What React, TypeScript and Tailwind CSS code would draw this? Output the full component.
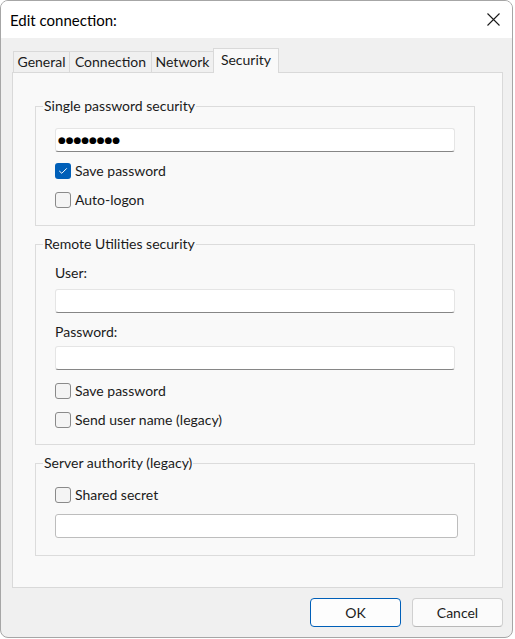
import React from "react";

function Checkbox({ checked, label }: { checked?: boolean; label: string }) {
  return (
    <div className="flex items-center h-[16px] gap-[4px]">
      {checked ? (
        <div className="w-[16px] h-[16px] rounded-[3px] bg-[#005fb8] flex items-center justify-center">
          <svg width="10" height="8" viewBox="0 0 10 8" fill="none">
            <path d="M1.5 4.2 L3.8 6.3 L8.5 1.6" stroke="#ffffff" strokeWidth="1" strokeLinecap="round" strokeLinejoin="round" />
          </svg>
        </div>
      ) : (
        <div className="w-[16px] h-[16px] rounded-[3px] border border-[#8a8a8a] bg-[#f4f4f4]" />
      )}
      <span className="leading-[20px] text-[14px] text-[#1b1b1b]">{label}</span>
    </div>
  );
}

function TextBox({ value, wide }: { value?: string; wide?: boolean }) {
  return wide ? (
    <div className="h-[24px] mr-[-3px] rounded-[3px] border border-[#bdbdbd] bg-white" />
  ) : (
    <div className="h-[24px] rounded-[3px] border border-[#e5e5e5] border-b-[#868686] bg-white flex items-center pl-[2px]">
      {value ? (
        <span className="font-['DejaVu_Sans',sans-serif] text-[9px] tracking-[-0.1px] leading-none text-black">{value}</span>
      ) : null}
    </div>
  );
}

function Legend({ children }: { children: React.ReactNode }) {
  return (
    <div className="-mt-[11px] -ml-[12px] px-[1px] w-fit h-[20px] leading-[20px] bg-[#f9f9f9] text-[14px] text-[#1b1b1b]">
      {children}
    </div>
  );
}

export default function App() {
  return (
    <div className="w-[515px] h-[639px] bg-white font-['Lato',sans-serif] text-[14px] text-[#1b1b1b]">
      <div className="w-[513px] h-[638px] rounded-[8px] border border-[#a6a6a6] overflow-hidden flex flex-col bg-[#f0f0f0]">
        {/* Title bar */}
        <div className="h-[37px] bg-white flex items-center justify-between pl-[9px] pr-[12px] shrink-0">
          <span className="text-[15px] text-black leading-[20px]">Edit connection:</span>
          <svg width="13" height="13" viewBox="0 0 13 13" fill="none">
            <path d="M0.5 0.5 L12.5 12.5 M12.5 0.5 L0.5 12.5" stroke="#1a1a1a" strokeWidth="1.1" />
          </svg>
        </div>

        {/* Body */}
        <div className="flex flex-col pt-[10px] pl-[11px] pr-[9px]">
          {/* Tabs */}
          <div className="flex items-end h-[24px] pl-[1px]">
            <div className="w-[57px] h-[21px] border border-b-0 border-[#d9d9d9] bg-[#f0f0f0] flex justify-center leading-[20px]">General</div>
            <div className="w-[83px] h-[21px] -ml-px border border-b-0 border-[#d9d9d9] bg-[#f0f0f0] flex justify-center leading-[20px]">Connection</div>
            <div className="w-[63px] h-[21px] -ml-px border border-b-0 border-[#d9d9d9] bg-[#f0f0f0] flex justify-center leading-[20px]">Network</div>
            <div className="relative z-10 w-[66px] h-[25px] -ml-px -mb-px border border-b-0 border-[#d9d9d9] bg-[#f9f9f9] flex justify-center pt-[1px] leading-[20px]">Security</div>
          </div>

          {/* Panel */}
          <div className="h-[516px] border border-[#d9d9d9] bg-[#f9f9f9] pl-[22px] pr-[27px]">
            {/* Group 1 */}
            <div className="mt-[33px] border border-[#dcdcdc] pl-[19px] pr-[19px] pb-[17px]">
              <Legend>Single password security</Legend>
              <div className="mt-[12px]">
                <TextBox value="●●●●●●●●" />
              </div>
              <div className="mt-[11px]">
                <Checkbox checked label="Save password" />
              </div>
              <div className="mt-[13px]">
                <Checkbox label="Auto-logon" />
              </div>
            </div>

            {/* Group 2 */}
            <div className="mt-[18px] border border-[#dcdcdc] pl-[19px] pr-[19px] pb-[16px]">
              <Legend>Remote Utilities security</Legend>
              <div className="mt-[9px] h-[20px] leading-[20px]">User:</div>
              <div className="mt-[6px]">
                <TextBox />
              </div>
              <div className="mt-[9px] h-[20px] leading-[20px]">Password:</div>
              <div className="mt-[4px]">
                <TextBox />
              </div>
              <div className="mt-[13px]">
                <Checkbox label="Save password" />
              </div>
              <div className="mt-[13px]">
                <Checkbox label="Send user name (legacy)" />
              </div>
            </div>

            {/* Group 3 */}
            <div className="mt-[18px] border border-[#dcdcdc] pl-[19px] pr-[19px] pb-[17px]">
              <Legend>Server authority (legacy)</Legend>
              <div className="mt-[14px]">
                <Checkbox label="Shared secret" />
              </div>
              <div className="mt-[11px]">
                <TextBox wide />
              </div>
            </div>
          </div>

          {/* Buttons */}
          <div className="flex justify-end gap-[11px] mt-[10px]">
            <button className="w-[91px] h-[29px] rounded-[4px] border border-[#005fb8] bg-[#fdfdfd] text-[14px] text-[#1b1b1b] leading-[20px]">OK</button>
            <button className="w-[91px] h-[29px] rounded-[4px] border border-[#d0d0d0] border-b-[#b8b8b8] bg-[#fbfbfb] text-[14px] text-[#1b1b1b] leading-[20px]">Cancel</button>
          </div>
        </div>
      </div>
    </div>
  );
}
